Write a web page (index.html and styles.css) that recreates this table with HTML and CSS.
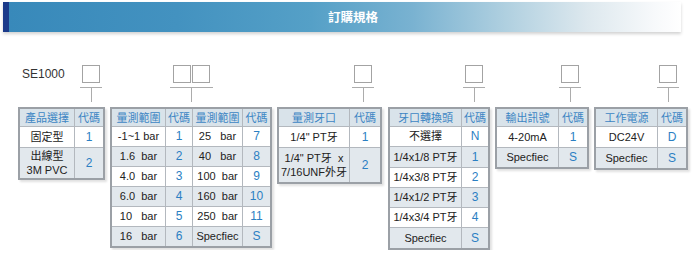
FILE: index.html
```html
<!DOCTYPE html>
<html lang="zh-Hant">
<head>
<meta charset="utf-8">
<title>訂購規格</title>
<link rel="stylesheet" href="styles.css">
</head>
<body>
<div class="banner"><span class="banner-title">訂購規格</span></div>

<div class="spec">
  <div class="group g1">
    <div class="conn-row">
      <span class="model">SE1000</span>
      <div class="conn">
        <div class="boxes"><span class="box"></span></div>
        <span class="hline"></span>
        <span class="vline"></span>
      </div>
    </div>
    <table>
      <colgroup><col class="c-57"><col></colgroup>
      <thead><tr><th>產品選擇</th><th>代碼</th></tr></thead>
      <tbody>
        <tr class="h21"><td>固定型</td><td class="code">1</td></tr>
        <tr class="h31"><td class="two">出線型<br>3M PVC</td><td class="code">2</td></tr>
      </tbody>
    </table>
  </div>

  <div class="group g2">
    <div class="conn wide">
      <div class="boxes"><span class="box"></span><span class="box"></span></div>
      <span class="hline"></span>
      <span class="vline"></span>
    </div>
    <table>
      <colgroup><col class="c-56"><col class="c-27"><col class="c-50"><col></colgroup>
      <thead><tr><th>量測範圍</th><th>代碼</th><th>量測範圍</th><th>代碼</th></tr></thead>
      <tbody>
        <tr><td>-1~1 bar</td><td class="code">1</td><td>25   bar</td><td class="code">7</td></tr>
        <tr><td>1.6  bar</td><td class="code">2</td><td>40   bar</td><td class="code">8</td></tr>
        <tr><td>4.0  bar</td><td class="code">3</td><td>100  bar</td><td class="code">9</td></tr>
        <tr><td>6.0  bar</td><td class="code">4</td><td>160  bar</td><td class="code">10</td></tr>
        <tr><td>10   bar</td><td class="code">5</td><td>250  bar</td><td class="code">11</td></tr>
        <tr><td>16   bar</td><td class="code">6</td><td>Specfiec</td><td class="code">S</td></tr>
      </tbody>
    </table>
  </div>

  <div class="group g3">
    <div class="conn">
      <div class="boxes"><span class="box"></span></div>
      <span class="hline"></span>
      <span class="vline"></span>
    </div>
    <table>
      <colgroup><col class="c-73"><col></colgroup>
      <thead><tr><th>量測牙口</th><th>代碼</th></tr></thead>
      <tbody>
        <tr class="h21"><td>1/4" PT牙</td><td class="code">1</td></tr>
        <tr class="h35"><td class="two">1/4" PT牙  x<br>7/16UNF外牙</td><td class="code">2</td></tr>
      </tbody>
    </table>
  </div>

  <div class="group g4">
    <div class="conn">
      <div class="boxes"><span class="box"></span></div>
      <span class="hline"></span>
      <span class="vline"></span>
    </div>
    <table>
      <colgroup><col class="c-74"><col></colgroup>
      <thead><tr><th>牙口轉換頭</th><th>代碼</th></tr></thead>
      <tbody>
        <tr><td>不選擇</td><td class="code">N</td></tr>
        <tr class="h21"><td>1/4x1/8 PT牙</td><td class="code">1</td></tr>
        <tr><td>1/4x3/8 PT牙</td><td class="code">2</td></tr>
        <tr><td>1/4x1/2 PT牙</td><td class="code">3</td></tr>
        <tr><td>1/4x3/4 PT牙</td><td class="code">4</td></tr>
        <tr class="h21"><td>Specfiec</td><td class="code">S</td></tr>
      </tbody>
    </table>
  </div>

  <div class="group g5">
    <div class="conn">
      <div class="boxes"><span class="box"></span></div>
      <span class="hline"></span>
      <span class="vline"></span>
    </div>
    <table>
      <colgroup><col class="c-64"><col></colgroup>
      <thead><tr><th>輸出訊號</th><th>代碼</th></tr></thead>
      <tbody>
        <tr class="h21"><td>4-20mA</td><td class="code">1</td></tr>
        <tr><td>Specfiec</td><td class="code">S</td></tr>
      </tbody>
    </table>
  </div>

  <div class="group g6">
    <div class="conn">
      <div class="boxes"><span class="box"></span></div>
      <span class="hline"></span>
      <span class="vline"></span>
    </div>
    <table>
      <colgroup><col class="c-64"><col></colgroup>
      <thead><tr><th>工作電源</th><th>代碼</th></tr></thead>
      <tbody>
        <tr class="h21"><td>DC24V</td><td class="code">D</td></tr>
        <tr class="h21"><td>Specfiec</td><td class="code">S</td></tr>
      </tbody>
    </table>
  </div>
</div>
</body>
</html>
```

FILE: styles.css
```css
html, body {
  margin: 0;
  padding: 0;
  background: #ffffff;
}

body {
  font-family: "Liberation Sans", "Noto Sans CJK TC", Arial, sans-serif;
  color: #222222;
}

/* ---------- banner ---------- */
.banner {
  margin: 2px 0 0 3px;
  width: 656px;
  height: 30px;
  padding-left: 16px;
  border-left: 6px solid #1b3a8a;
  background: linear-gradient(to right,
    #3889ba 0%,
    #4392c0 25%,
    #55a0c7 45%,
    #79b2d1 60%,
    #b0d0e0 74%,
    #dde8ee 86%,
    #f7f9fb 96%,
    #ffffff 100%);
  box-shadow: 0 2px 3px rgba(0, 0, 0, 0.18);
  display: flex;
  align-items: center;
  justify-content: center;
  box-sizing: content-box;
}

.banner-title {
  color: #ffffff;
  font-family: "Noto Sans CJK TC", "Liberation Sans", sans-serif;
  font-weight: 700;
  font-size: 12.5px;
  line-height: 14px;
}

/* ---------- spec area ---------- */
.spec {
  display: flex;
  align-items: flex-start;
  margin-top: 33px;
  padding-left: 18px;
}

.group {
  display: flex;
  flex-direction: column;
  align-items: flex-start;
}

.g1 { width: 87px; }
.g2 { width: 162px; margin-left: 5px; }
.g3 { width: 105px; margin-left: 5px; }
.g4 { width: 102px; margin-left: 6px; }
.g5 { width: 94px;  margin-left: 5px; }
.g6 { width: 94px;  margin-left: 5px; }

.conn-row {
  display: flex;
  align-items: flex-start;
}

.model {
  width: 58px;
  padding-left: 4px;
  font-size: 12px;
  line-height: 18px;
  color: #333333;
}

/* connector: box(es) with a T stem down to the table */
.conn {
  width: 22px;
  display: flex;
  flex-direction: column;
  align-items: center;
  margin-bottom: 5px;
}

.conn.wide { width: 43px; }

.g2 .conn { margin-left: 60px; }
.g3 .conn { margin-left: 75px; }
.g4 .conn { margin-left: 75px; }
.g5 .conn { margin-left: 64px; }
.g6 .conn { margin-left: 63px; }

.boxes {
  display: flex;
}

.box {
  display: block;
  width: 16px;
  height: 16px;
  border: 1px solid #a3a3a3;
  background: #ffffff;
}

.box + .box {
  margin-left: 1px;
}

.hline {
  display: block;
  align-self: stretch;
  height: 1px;
  margin-top: 4px;
  background: #acacac;
}

.vline {
  display: block;
  width: 1px;
  height: 14px;
  background: #acacac;
}

/* ---------- tables ---------- */
table {
  width: 100%;
  border: 2px solid #9ba0a6;
  border-spacing: 0;
  table-layout: fixed;
  box-shadow: 2px 2px 2px rgba(0, 0, 0, 0.12);
  font-size: 11px;
}

.c-57 { width: 55px; }
.c-56 { width: 54px; }
.c-27 { width: 27px; }
.c-50 { width: 50px; }
.c-73 { width: 71px; }
.c-74 { width: 72px; }
.c-64 { width: 62px; }

th, td {
  padding: 0;
  text-align: center;
  vertical-align: middle;
  border-right: 1px solid #b3b8be;
  border-bottom: 1px solid #b3b8be;
  white-space: pre;
}

th:last-child, td:last-child {
  border-right: 0;
}

tbody tr:last-child td {
  border-bottom: 0;
}

th {
  height: 17px;
  background: #d9e3ea;
  color: #3d86c4;
  font-weight: 400;
  font-family: "Noto Sans CJK TC", "Liberation Sans", sans-serif;
  font-size: 11px;
  line-height: 13px;
}

td {
  height: 19px;
  line-height: 13px;
  color: #222222;
}

tbody tr:nth-child(even) td {
  background: #e2e8ed;
}

tr.h21 td { height: 20px; }
tr.h31 td { height: 30px; }
tr.h35 td { height: 34px; }

td.two {
  line-height: 14px;
}

td.code {
  color: #2b7fc3;
  font-size: 12px;
}
```
